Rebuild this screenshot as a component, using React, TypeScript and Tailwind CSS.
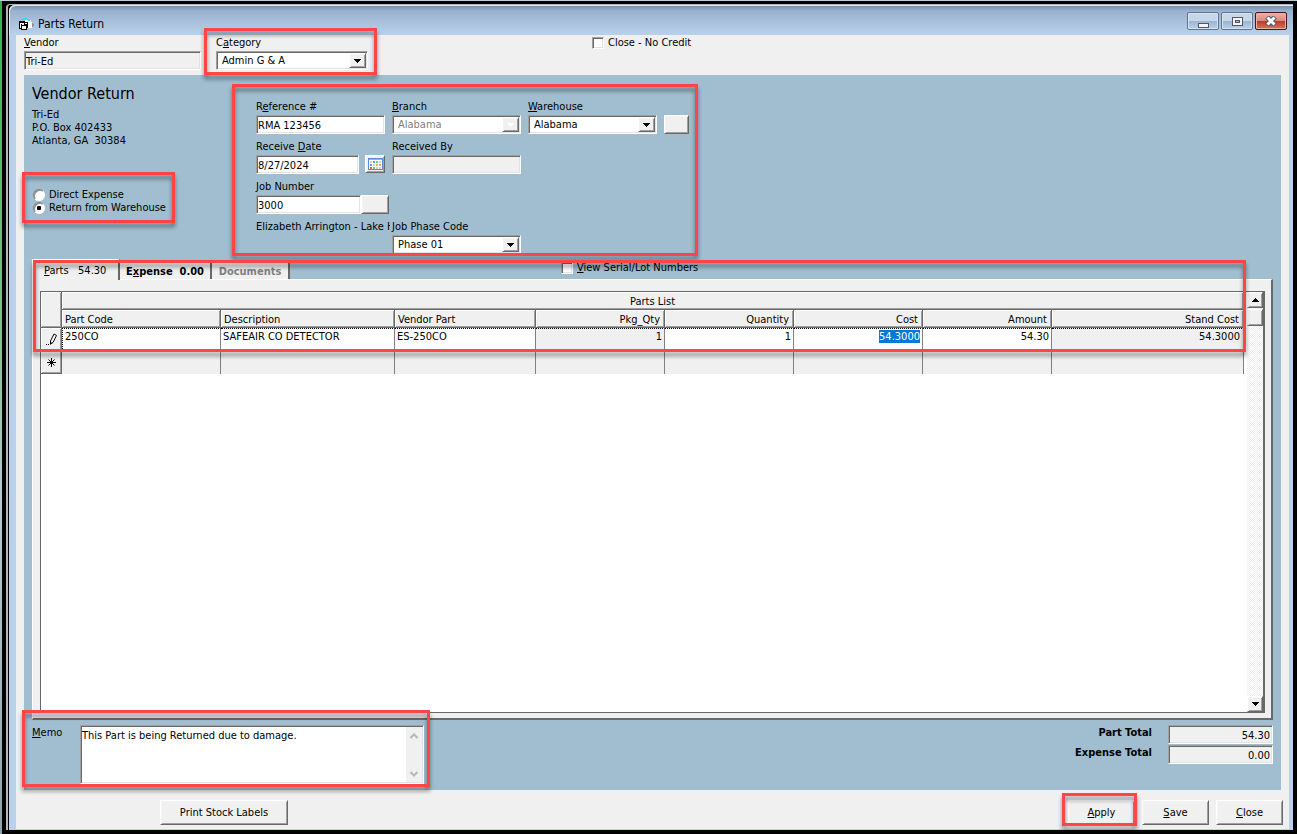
import type { ReactNode } from "react";
import clsx from "clsx";

const sunken =
  "border border-t-[#a0a0a0] border-l-[#a0a0a0] border-r-white border-b-white shadow-[inset_1px_1px_0_#696969,inset_-1px_-1px_0_#e3e3e3]";
const raised =
  "border border-t-white border-l-white border-r-[#696969] border-b-[#696969] bg-[#f0f0f0] shadow-[inset_1px_1px_0_#f4f4f4,inset_-1px_-1px_0_#a0a0a0]";

// "&Vendor" underlines the letter after the ampersand
function Mnemonic({ text }: { text: string }) {
  const i = text.indexOf("&");
  if (i < 0) return <>{text}</>;
  return (
    <>
      {text.slice(0, i)}
      <u className="underline-offset-1">{text[i + 1]}</u>
      {text.slice(i + 2)}
    </>
  );
}

function Highlight({ className }: { className: string }) {
  return (
    <div
      className={clsx(
        "pointer-events-none absolute z-20 border-3 border-[#ff4545] drop-shadow-[0_4px_2px_rgba(0,0,0,0.45)]",
        className
      )}
    />
  );
}

function Field({ id, label, children }: { id?: string; label: string; children?: ReactNode }) {
  return (
    <div>
      <label htmlFor={id} className="block h-[15px] whitespace-nowrap">
        <Mnemonic text={label} />
      </label>
      {children}
    </div>
  );
}

type TextBoxProps = {
  id: string;
  value: string;
  className?: string;
  readOnly?: boolean;
};

function TextBox({ id, value, className, readOnly }: TextBoxProps) {
  return (
    <input
      id={id}
      type="text"
      defaultValue={value}
      readOnly={readOnly}
      className={clsx(sunken, "block h-[19px] px-px pt-px outline-none", readOnly ? "bg-[#f0f0f0]" : "bg-white", className)}
    />
  );
}

function Combo({ id, value, className, disabled }: { id: string; value: string; className: string; disabled?: boolean }) {
  return (
    <div className={clsx(sunken, "relative h-[19px] bg-white", className)}>
      <select
        id={id}
        disabled={disabled}
        defaultValue={value}
        className={clsx(
          "block h-[16px] w-full appearance-none bg-transparent pl-[5px] outline-none disabled:opacity-100",
          disabled ? "text-[#808080]" : "text-black"
        )}
      >
        <option>{value}</option>
      </select>
      <span className={clsx(raised, "pointer-events-none absolute top-px right-px flex h-[15px] w-[17px] items-center justify-center")}>
        <svg width="7" height="4" viewBox="0 0 7 4" shapeRendering="crispEdges">
          <path d="M0 0h7v1h-1v1h-1v1h-1v1h-1v-1h-1v-1h-1v-1h-1z" fill={disabled ? "#ffffff" : "#000000"} />
        </svg>
      </span>
    </div>
  );
}

function CheckBox({ id, label }: { id: string; label: string }) {
  return (
    <div className="flex items-center gap-1">
      <input id={id} type="checkbox" className={clsx(sunken, "size-3 appearance-none bg-white")} />
      <label htmlFor={id}>
        <Mnemonic text={label} />
      </label>
    </div>
  );
}

function Radio({ id, label, checked }: { id: string; label: string; checked?: boolean }) {
  return (
    <div className="flex h-[13px] items-center gap-1 pl-px">
      <input
        id={id}
        type="radio"
        name="return-type"
        defaultChecked={checked}
        className="size-3 appearance-none rounded-full border border-t-[#808080] border-l-[#808080] border-r-white border-b-white bg-white shadow-[inset_1px_1px_0_#8a8a8a] checked:bg-[radial-gradient(circle,#000_0_2px,#fff_2.5px)]"
      />
      <label htmlFor={id}>{label}</label>
    </div>
  );
}

function PushButton({ label, className }: { label: string; className: string }) {
  return (
    <button type="button" className={clsx(raised, "h-[25px]", className)}>
      <Mnemonic text={label} />
    </button>
  );
}

function AppIcon() {
  return (
    <svg width="16" height="13" viewBox="0 0 16 13" shapeRendering="crispEdges">
      <path d="M6 2h6v2h1v6H9V4H6z" fill="#ffffff" />
      <path d="M2 1h3v1H2zM4 0h4v1H4zM6 1h4v1H6zM9 2h2v1H9z" fill="#19e3ec" />
      <path d="M13 5h1v1h1v2h-1v1h-1z" fill="#8a8f98" />
      <path d="M0 3h6v1h3v6H8v2H2v-1H0z" fill="#000000" />
      <path d="M1 5h4v1H1zM1 6h1v4H1z" fill="#ffffff" />
      <path d="M3 8h4v3H3zM6 5h2v1H6zM3 6h2v1H3z" fill="#ffffff" />
    </svg>
  );
}

function CalendarIcon() {
  const dots = [
    ["#d0d0d0", "#5b9bea", "#7dc47f", "#d0d0d0"],
    ["#5b9bea", "#d0d0d0", "#f2b04c", "#f2a04c"],
    ["#f06060", "#7dc47f", "#d0d0d0", "#d0d0d0"],
  ];
  return (
    <svg width="15" height="12" viewBox="0 0 15 12" shapeRendering="crispEdges">
      <rect width="15" height="12" fill="#5a8cd6" />
      <rect x="1" y="1" width="13" height="1" fill="#8db4ee" />
      <rect x="1" y="2" width="13" height="9" fill="#ffffff" />
      {dots.map((row, y) => row.map((c, x) => <rect key={`${x}-${y}`} x={2 + x * 3} y={3 + y * 3} width="2" height="2" fill={c} />))}
    </svg>
  );
}

function WindowButtons() {
  const base = "flex h-[18px] w-8 items-center justify-center rounded-[2px] border";
  const plain = "border-[#5f7391] bg-[linear-gradient(#c5d7e9_0_48%,#99b4d0_50%,#b9d2ea)] shadow-[inset_0_0_0_1px_#d6e4f2]";
  return (
    <div className="flex gap-0.5">
      <button type="button" aria-label="Minimize" className={clsx(base, plain)}>
        <svg width="11" height="13" viewBox="0 0 11 13" shapeRendering="crispEdges">
          <rect x="0" y="8" width="11" height="5" fill="#535666" />
          <rect x="1" y="9" width="9" height="3" fill="#f5f5f5" />
        </svg>
      </button>
      <button type="button" aria-label="Maximize" className={clsx(base, plain)}>
        <svg width="11" height="9" viewBox="0 0 11 9" shapeRendering="crispEdges">
          <rect width="11" height="9" fill="#535666" />
          <rect x="1" y="1" width="9" height="7" fill="#f5f5f5" />
          <rect x="3" y="3" width="5" height="3" fill="#535666" />
          <rect x="4" y="4" width="3" height="1" fill="#9db8d6" />
        </svg>
      </button>
      <button
        type="button"
        aria-label="Close window"
        className={clsx(base, "border-[#43141b] bg-[linear-gradient(#e9a99c_0_10%,#d98a7c_48%,#b83c22_50%,#d27463)] shadow-[inset_0_0_0_1px_#e8b0a6]")}
      >
        <svg width="12" height="10" viewBox="0 0 12 10">
          <path d="M2 1l8 8M10 1l-8 8" stroke="#535666" strokeWidth="5" />
          <path d="M2.5 1.5l7 7M9.5 1.5l-7 7" stroke="#ffffff" strokeWidth="3" />
        </svg>
      </button>
    </div>
  );
}

const columns = [
  { title: "Part Code", width: "w-[159px]", value: "250CO" },
  { title: "Description", width: "w-[174px]", value: "SAFEAIR CO DETECTOR" },
  { title: "Vendor Part", width: "w-[141px]", value: "ES-250CO" },
  { title: "Pkg_Qty", width: "w-[129px]", value: "1", right: true, locked: true },
  { title: "Quantity", width: "w-[129px]", value: "1", right: true },
  { title: "Cost", width: "w-[129px]", value: "54.3000", right: true, selected: true },
  { title: "Amount", width: "w-[129px]", value: "54.30", right: true },
  { title: "Stand Cost", width: "", value: "54.3000", right: true, locked: true },
];

const headCell = "border-r border-b border-[#696969] bg-[#f0f0f0] font-normal shadow-[inset_1px_1px_0_#fff,inset_-1px_-1px_0_#a0a0a0]";

function PartsTable() {
  return (
    <table className="w-full table-fixed border-separate border-spacing-0">
      <colgroup>
        <col className="w-[21px]" />
        {columns.map((c) => (
          <col key={c.title} className={c.width} />
        ))}
      </colgroup>
      <thead>
        <tr>
          <th rowSpan={2} aria-label="Row status" className={headCell} />
          <th colSpan={8} className={clsx(headCell, "h-[18px] pt-0.5")}>
            Parts List
          </th>
        </tr>
        <tr>
          {columns.map((c) => (
            <th key={c.title} scope="col" className={clsx(headCell, "h-[18px] pt-0.5", c.right ? "pr-1 text-right" : "pl-[3px] text-left")}>
              {c.title}
            </th>
          ))}
        </tr>
      </thead>
      <tbody>
        <tr>
          <td className={clsx(headCell, "h-[23px] pl-[5px]")}>
            <svg width="11" height="12" viewBox="0 0 11 12">
              <path d="M0 11h1v1H0zM2 11h1v1H2z" shapeRendering="crispEdges" />
              <path d="M4.5 11V8L8 1l2.5 1.5L7 9.5z" fill="#fff" stroke="#000" />
              <path d="M4 9.5h2L4 12z" />
            </svg>
          </td>
          {columns.map((c, i) => (
            <td
              key={c.title}
              className={clsx(
                "border-t border-r border-t-black border-r-[#808080] pt-px align-top leading-[14px] [border-top-style:dotted]",
                !c.right && "pl-0.5",
                c.right && (i === columns.length - 1 ? "pr-[3px] text-right" : "pr-0.5 text-right"),
                c.locked ? "bg-[#f0f0f0]" : "bg-white",
                i === 0 && "border-l border-l-black [border-left-style:dotted]"
              )}
            >
              {c.selected ? <span className="inline-block h-[13px] bg-[#0078d7] leading-[13px] text-white">{c.value}</span> : c.value}
            </td>
          ))}
        </tr>
        <tr>
          <td className={clsx(headCell, "h-[23px] pl-1.5")}>
            <svg width="9" height="9" viewBox="0 0 9 9" stroke="#000">
              <path d="M4.5 0v9M0 4.5h9M1.5 1.5l6 6M7.5 1.5l-6 6" />
            </svg>
          </td>
          {columns.map((c) => (
            <td key={c.title} className="border-r border-[#808080] bg-[#f0f0f0]" />
          ))}
        </tr>
      </tbody>
    </table>
  );
}

function GridScrollBar() {
  return (
    <div className="flex w-4 flex-col bg-[repeating-conic-gradient(#ffffff_0_25%,#eeeeee_0_50%)] bg-[size:2px_2px]">
      <button type="button" aria-label="Scroll up" className={clsx(raised, "flex h-4 items-center justify-center")}>
        <svg width="7" height="4" viewBox="0 0 7 4" shapeRendering="crispEdges">
          <path d="M3 0h1v1h1v1h1v1h1v1h-7v-1h1v-1h1v-1h1z" />
        </svg>
      </button>
      <div className={clsx(raised, "mt-px h-[17px]")} />
      <button type="button" aria-label="Scroll down" className={clsx(raised, "mt-auto flex h-4 items-center justify-center")}>
        <svg width="7" height="4" viewBox="0 0 7 4" shapeRendering="crispEdges">
          <path d="M0 0h7v1h-1v1h-1v1h-1v1h-1v-1h-1v-1h-1v-1h-1z" />
        </svg>
      </button>
    </div>
  );
}

function ReturnForm() {
  return (
    <div className="relative grid grid-cols-[136px_136px_161px] gap-y-1.5 pt-[25px]">
      <Highlight className="top-[9px] -right-[9px] -bottom-0.5 -left-6" />
      <Field id="reference" label="R&eference #">
        <TextBox id="reference" value="RMA 123456" className="w-[129px]" />
      </Field>
      <Field id="branch" label="&Branch">
        <Combo id="branch" value="Alabama" className="w-[129px]" disabled />
      </Field>
      <Field id="warehouse" label="&Warehouse">
        <div className="flex justify-between">
          <Combo id="warehouse" value="Alabama" className="w-[129px]" />
          <button type="button" aria-label="Find warehouse" className={clsx(raised, "h-[19px] w-[25px]")} />
        </div>
      </Field>

      <Field id="receive-date" label="Receive &Date">
        <div className="flex gap-1.5">
          <TextBox id="receive-date" value="8/27/2024" className="w-[103px]" />
          <button type="button" aria-label="Pick date" className={clsx(raised, "flex h-[18px] w-5 items-center justify-center")}>
            <CalendarIcon />
          </button>
        </div>
      </Field>
      <Field id="received-by" label="Received By">
        <TextBox id="received-by" value="" className="w-[129px]" readOnly />
      </Field>
      <div />

      <Field id="job-number" label="Job Number">
        <div className="flex">
          <TextBox id="job-number" value="3000" className="w-[105px]" />
          <button type="button" aria-label="Find job" className={clsx(raised, "h-[19px] w-7")} />
        </div>
      </Field>
      <div />
      <div />

      <div className="h-[15px] w-[134px] overflow-hidden whitespace-nowrap">Elizabeth Arrington - Lake H</div>
      <Field id="job-phase" label="Job Phase Code">
        <Combo id="job-phase" value="Phase 01" className="w-[129px]" />
      </Field>
    </div>
  );
}

function PartsTabs() {
  const tab = "border-t border-r-2 border-t-white border-r-[#696969] bg-[#f0f0f0]";
  return (
    <section className="relative flex flex-1 flex-col">
      <div className="flex h-5 items-end">
        <div role="tablist" className="flex h-full w-[258px] items-end">
          <button
            type="button"
            role="tab"
            aria-selected
            className={clsx(tab, "relative z-10 -mb-px h-[21px] w-[88px] border-l border-l-white pl-[11px] text-left whitespace-pre")}
          >
            <Mnemonic text="&Parts   54.30" />
          </button>
          <button type="button" role="tab" className={clsx(tab, "h-[17px] w-[92px] pt-px font-bold whitespace-pre")}>
            <Mnemonic text="E&xpense  0.00" />
          </button>
          <button type="button" role="tab" className={clsx(tab, "h-[17px] w-[78px] pt-px font-bold text-[#808080]")}>
            Documents
          </button>
        </div>
        <div className="mb-[5px] ml-[271px]">
          <CheckBox id="serial" label="&View Serial/Lot Numbers" />
        </div>
      </div>
      <div className="flex flex-1 flex-col border-t border-r-2 border-b-2 border-l border-t-white border-r-[#696969] border-b-[#696969] border-l-white bg-[#f0f0f0] pt-[11px] pr-1.5 pb-[5px] pl-[7px]">
        <div className="flex flex-1 border border-r-2 border-[#696969] bg-white">
          <div className="flex-1 pr-[3px]">
            <PartsTable />
          </div>
          <GridScrollBar />
        </div>
      </div>
      <Highlight className="top-px right-[27px] left-px h-[92px]" />
    </section>
  );
}

function Memo() {
  return (
    <div className="relative flex w-[392px] justify-between">
      <Highlight className="-top-[15px] -right-1.5 -bottom-[3px] -left-2.5" />
      <label htmlFor="memo" className="pt-px">
        <Mnemonic text="&Memo" />
      </label>
      <div className={clsx(sunken, "flex h-[59px] w-[344px] bg-white p-px")}>
        <textarea
          id="memo"
          defaultValue="This Part is being Returned due to damage."
          className="flex-1 resize-none overflow-hidden pt-0.5 leading-[13px] outline-none"
        />
        <div className="flex w-4 flex-col items-center justify-between bg-[#f0f0f0] pt-1.5 pb-[5px] text-[#b8b8b8]">
          <svg width="8" height="6" viewBox="0 0 8 6" fill="none" stroke="currentColor" strokeWidth="2">
            <path d="M0.5 5l3.5-3.5L7.5 5" />
          </svg>
          <svg width="8" height="6" viewBox="0 0 8 6" fill="none" stroke="currentColor" strokeWidth="2">
            <path d="M0.5 1l3.5 3.5L7.5 1" />
          </svg>
        </div>
      </div>
    </div>
  );
}

function Totals() {
  const rows = [
    { id: "part-total", label: "Part Total", value: "54.30" },
    { id: "expense-total", label: "Expense Total", value: "0.00" },
  ];
  return (
    <div className="flex flex-col gap-px">
      {rows.map((row) => (
        <div key={row.id} className="flex justify-end gap-4">
          <label htmlFor={row.id} className="pt-px font-bold">
            {row.label}
          </label>
          <TextBox id={row.id} value={row.value} className="w-[105px] pr-0.5 text-right" readOnly />
        </div>
      ))}
    </div>
  );
}

export default function App() {
  return (
    <div className="flex min-h-screen flex-col bg-black font-['DejaVu_Sans_Condensed','DejaVu_Sans',sans-serif] text-[11px] leading-[13px] text-black">
      <div className="h-px bg-[#b9d0de]" />
      <div className="flex flex-1">
        <div className="w-0.5 bg-[linear-gradient(#2fb34f,#7fc08c_40%,#b9c8d0_60%,#8fa3ad)]" />
        <div className="flex flex-1 pt-[3px] pr-1 pb-1 pl-1">
          <div className="flex flex-1 rounded-tl-[4px] border-t border-l-2 border-[#b4b8bc] bg-black pl-px">
            <main className="flex flex-1 flex-col rounded-tl-[6px] bg-[#b9d1ea] pr-1 pb-px pl-[7px]">
              <header className="-mr-1 -ml-[7px] flex h-[30px] items-center rounded-tl-[6px] bg-[linear-gradient(#6f88a3,#9ab2cf_20%,#b9d1ea)] pt-2 pr-1.5 pl-2.5 shadow-[inset_1px_1px_0_#dfe9f3]">
                <AppIcon />
                <h1 className="ml-[3px] flex-1 text-xs">Parts Return</h1>
                <div className="mb-1.5">
                  <WindowButtons />
                </div>
              </header>

              <div className="flex flex-1 flex-col bg-[#f0f0f0] px-2">
                <div className="flex h-10 pt-px">
                  <div className="w-[192px]">
                    <label htmlFor="vendor" className="block h-[15px]">
                      <Mnemonic text="&Vendor" />
                    </label>
                    <TextBox id="vendor" value="Tri-Ed" className="w-[177px]" readOnly />
                  </div>
                  <div className="relative w-[152px]">
                    <Highlight className="-top-2 -right-[9px] -left-3 h-[47px]" />
                    <Field id="category" label="C&ategory">
                      <Combo id="category" value="Admin G & A" className="w-[152px]" />
                    </Field>
                  </div>
                  <div className="ml-[224px]">
                    <CheckBox id="close-no-credit" label="Close - No Credit" />
                  </div>
                </div>

                <div className="flex flex-1 flex-col bg-[#a0bed0] px-2">
                  <div className="flex pb-[5px]">
                    <div className="w-[224px] pt-2.5">
                      <h2 className="text-base leading-[18px]">Vendor Return</h2>
                      <address className="mt-[5px] whitespace-pre not-italic">
                        Tri-Ed
                        <br />
                        P.O. Box 402433
                        <br />
                        {"Atlanta, GA  30384"}
                      </address>
                      <div className="relative mt-10 w-[134px] pt-px">
                        <Highlight className="-top-[15px] -right-[9px] -bottom-[9px] -left-2.5" />
                        <Radio id="direct" label="Direct Expense" />
                        <Radio id="warehouse-return" label="Return from Warehouse" checked />
                      </div>
                    </div>
                    <ReturnForm />
                  </div>

                  <PartsTabs />

                  <div className="flex items-start justify-between pt-[5px] pb-1.5">
                    <Memo />
                    <Totals />
                  </div>
                </div>

                <footer className="-mr-0.5 flex pt-2.5 pb-1 pl-[136px]">
                  <PushButton label="Print Stock Labels" className="w-32" />
                  <div className="ml-auto flex gap-[7px]">
                    <div className="relative">
                      <Highlight className="-top-[7px] -right-0.5 -bottom-px -left-1.5" />
                      <PushButton label="&Apply" className="w-[67px]" />
                    </div>
                    <PushButton label="&Save" className="w-[67px]" />
                    <PushButton label="&Close" className="w-[67px]" />
                  </div>
                </footer>
              </div>
            </main>
          </div>
        </div>
      </div>
    </div>
  );
}
